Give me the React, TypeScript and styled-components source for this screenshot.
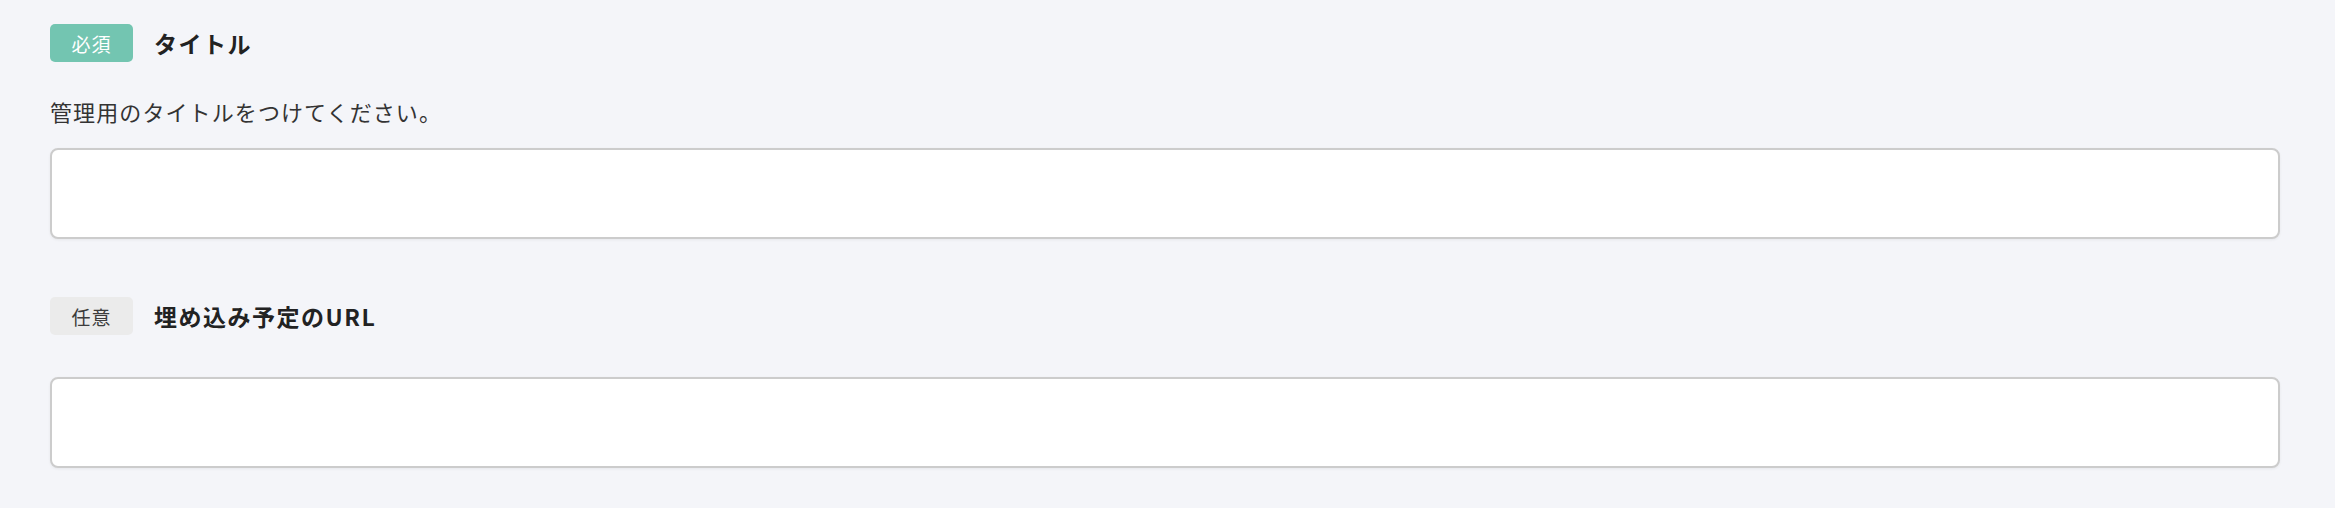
import styled, { createGlobalStyle } from "styled-components";

const GlobalStyle = createGlobalStyle`
  html, body {
    margin: 0;
    padding: 0;
    background: #f4f5f9;
  }
  body {
    font-family: "Noto Sans CJK JP", "Noto Sans", sans-serif;
    color: #333;
  }
`;

export default function App() {
  return (
    <>
      <GlobalStyle />
      <Page>
        <Field>
          <FieldHeader>
            <Badge $required>必須</Badge>
            <Label>タイトル</Label>
          </FieldHeader>
          <Description>管理用のタイトルをつけてください。</Description>
          <Input type="text" />
        </Field>
        <Field $second>
          <FieldHeader>
            <Badge>任意</Badge>
            <Label>埋め込み予定のURL</Label>
          </FieldHeader>
          <Input type="text" $spaced />
        </Field>
      </Page>
    </>
  );
}

const Page = styled.div`
  padding: 24px 55px 38px 50px;
  display: flex;
  flex-direction: column;
`;

const Field = styled.div<{ $second?: boolean }>`
  display: flex;
  flex-direction: column;
  margin-top: ${(p) => (p.$second ? "58px" : "0")};
`;

const FieldHeader = styled.div`
  display: flex;
  align-items: center;
  gap: 21px;
  height: 38px;
`;

const Badge = styled.span<{ $required?: boolean }>`
  display: inline-flex;
  align-items: center;
  justify-content: center;
  width: 83px;
  height: 38px;
  border-radius: 5px;
  font-size: 19px;
  font-weight: 400;
  letter-spacing: 1px;
  background: ${(p) => (p.$required ? "#73c5b1" : "#ebebeb")};
  color: ${(p) => (p.$required ? "#ffffff" : "#3c3c3c")};
`;

const Label = styled.span`
  font-size: 23px;
  font-weight: 700;
  letter-spacing: 1.5px;
  color: #222;
`;

const Description = styled.p`
  margin: 34px 0 0;
  font-size: 22px;
  line-height: 30px;
  letter-spacing: 1.1px;
  color: #333;
`;

const Input = styled.input<{ $spaced?: boolean }>`
  box-sizing: border-box;
  width: 100%;
  height: 91px;
  margin-top: ${(p) => (p.$spaced ? "42px" : "22px")};
  border: 2px solid #cccccc;
  border-radius: 8px;
  background: #ffffff;
  box-shadow: 0 1px 3px rgba(0, 0, 0, 0.06);
  outline: none;
  padding: 0 20px;
  font-size: 21px;
`;
